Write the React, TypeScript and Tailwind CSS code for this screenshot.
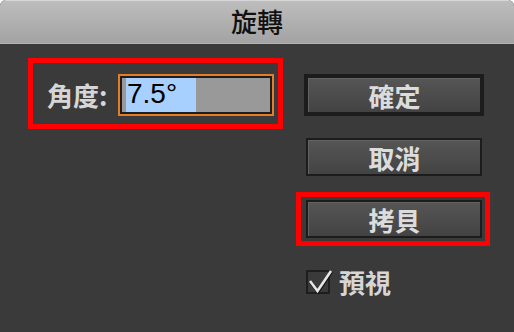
const cjk = { fontFamily: '"Noto Sans CJK TC", "Noto Sans", sans-serif' };

function Btn({ label, thick }: { label: string; thick?: boolean }) {
  return (
    <div
      className={
        thick
          ? "w-[180px] h-[42px] border-4 border-[#1c1c1c] bg-[#1c1c1c]"
          : "w-[176px] h-[38px] border-2 border-[#1c1c1c] bg-[#1c1c1c]"
      }
    >
      <div
        className="h-full flex items-center justify-center text-[26px] font-bold text-[#dcdcdc] bg-gradient-to-b from-[#555555] to-[#434343] border-t border-l border-[#626262] leading-none"
        style={cjk}
      >
        {label}
      </div>
    </div>
  );
}

export default function App() {
  return (
    <div className="w-[514px] h-[332px] bg-white">
      <div className="w-[514px] h-[332px] rounded-t-[6px] overflow-hidden bg-[#3a3a3a] flex flex-col">
        <div className="h-[44px] shrink-0 bg-gradient-to-b from-[#bdbdbd] to-[#a3a3a3] border-t border-[#d6d6d6] border-b border-b-[#b4b4b4] flex items-center justify-center">
          <span className="text-[26px] font-medium text-[#111] leading-none pb-[2px]" style={cjk}>
            旋轉
          </span>
        </div>

        <div className="flex pl-[28px] pt-[14px]">
          <div className="w-[255px] h-[71px] border-[5px] border-[#ff0000] flex items-center pl-[14px] pt-[3px]">
            <span className="text-[26px] font-bold text-[#d6d6d6] leading-none w-[71px]" style={cjk}>
              角度:
            </span>
            <div className="w-[156px] h-[42px] border-2 border-[#e27d2b]">
              <div className="h-full border-2 border-[#1e1e1e] bg-[#999999] pl-[4px]">
                <div
                  className="w-[70px] h-full bg-[#a8d0ff] text-black text-[28px] leading-[32px] pl-[1px]"
                  style={{ fontFamily: '"Liberation Sans", Arial, sans-serif' }}
                >
                  7.5°
                </div>
              </div>
            </div>
          </div>

          <div className="ml-[13px] mt-[16px] w-[194px] flex flex-col">
            <div className="ml-[8px]">
              <Btn label="確定" thick />
            </div>
            <div className="ml-[10px] mt-[22px]">
              <Btn label="取消" />
            </div>
            <div className="mt-[16px] w-[194px] h-[54px] border-[5px] border-[#ff0000] pl-[5px] pt-[3px]">
              <Btn label="拷貝" />
            </div>
            <div className="ml-[10px] mt-[23px] flex items-center gap-[9px]">
              <div className="relative w-[24px] h-[24px] border-2 border-[#1e1e1e]">
                <svg
                  className="absolute left-[1px] top-[-4px]"
                  width="26"
                  height="28"
                  viewBox="0 0 26 28"
                >
                  <polyline
                    points="1,13 8.5,23 22,3"
                    fill="none"
                    stroke="#111"
                    strokeWidth="3"
                    transform="translate(0.5,1)"
                  />
                  <polyline points="1,13 8.5,23 22,3" fill="none" stroke="#e6e6e6" strokeWidth="2.6" />
                </svg>
              </div>
              <span className="text-[26px] font-bold text-[#d6d6d6] leading-none" style={cjk}>
                預視
              </span>
            </div>
          </div>
        </div>
      </div>
    </div>
  );
}
